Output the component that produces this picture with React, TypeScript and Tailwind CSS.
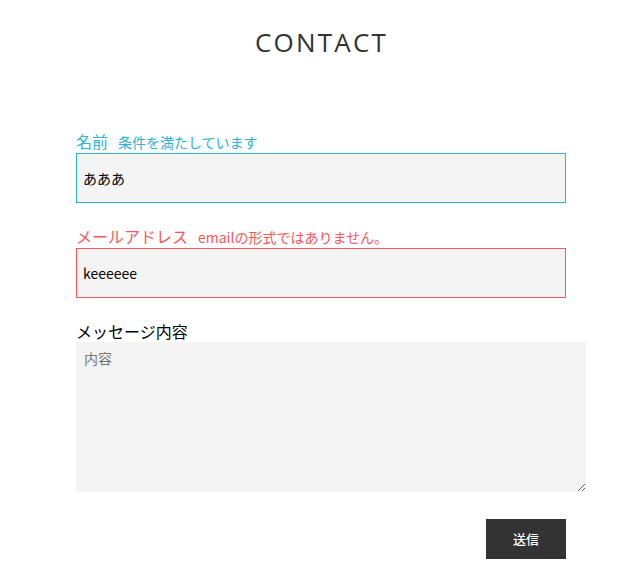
export default function App() {
  return (
    <div className="min-h-[587px] w-full bg-white font-['Open_Sans','Noto_Sans_CJK_JP',sans-serif] text-[#333]">
      <h1 className="pt-[24px] text-center text-[26px] font-normal leading-[36px] tracking-[2.2px] text-[#333]">
        CONTACT
      </h1>

      <form className="ml-[76px] mt-[70px] flex w-[510px] flex-col">
        {/* 名前 */}
        <div className="flex items-baseline gap-[10px] font-['Noto_Sans_CJK_JP',sans-serif] leading-[22px] text-[#2bb5d3]">
          <span className="text-[16px]">名前</span>
          <span className="text-[14px]">条件を満たしています</span>
        </div>
        <input
          defaultValue="あああ"
          className="h-[50px] w-[490px] border border-[#2bb5d3] bg-[#f4f4f4] px-[6px] font-['Noto_Sans_CJK_JP',sans-serif] text-[14px] text-black outline-none"
        />

        {/* メールアドレス */}
        <div className="mt-[22px] flex items-baseline gap-[10px] font-['Noto_Sans_CJK_JP',sans-serif] leading-[22px] text-[#f55a5a]">
          <span className="text-[16px]">メールアドレス</span>
          <span className="text-[14px]">emailの形式ではありません。</span>
        </div>
        <input
          defaultValue="keeeeee"
          className="h-[50px] w-[490px] border border-[#f55a5a] bg-[#f4f4f4] px-[6px] font-['Noto_Sans_CJK_JP',sans-serif] text-[14px] text-black outline-none"
        />

        {/* メッセージ内容 */}
        <div className="mt-[22px] font-['Noto_Sans_CJK_JP',sans-serif] text-[16px] leading-[22px] text-black">
          メッセージ内容
        </div>
        <textarea
          placeholder="内容"
          className="h-[150px] w-[510px] resize-y bg-[#f4f4f4] px-[8px] py-[6px] font-['Noto_Sans_CJK_JP',sans-serif] text-[14px] text-black outline-none placeholder:text-[#777]"
        />

        <div className="mt-[27px] flex w-[490px] justify-end">
          <button
            type="button"
            className="h-[40px] w-[80px] bg-[#333] font-['Noto_Sans_CJK_JP',sans-serif] text-[13px] font-medium text-white"
          >
            送信
          </button>
        </div>
      </form>
    </div>
  );
}
